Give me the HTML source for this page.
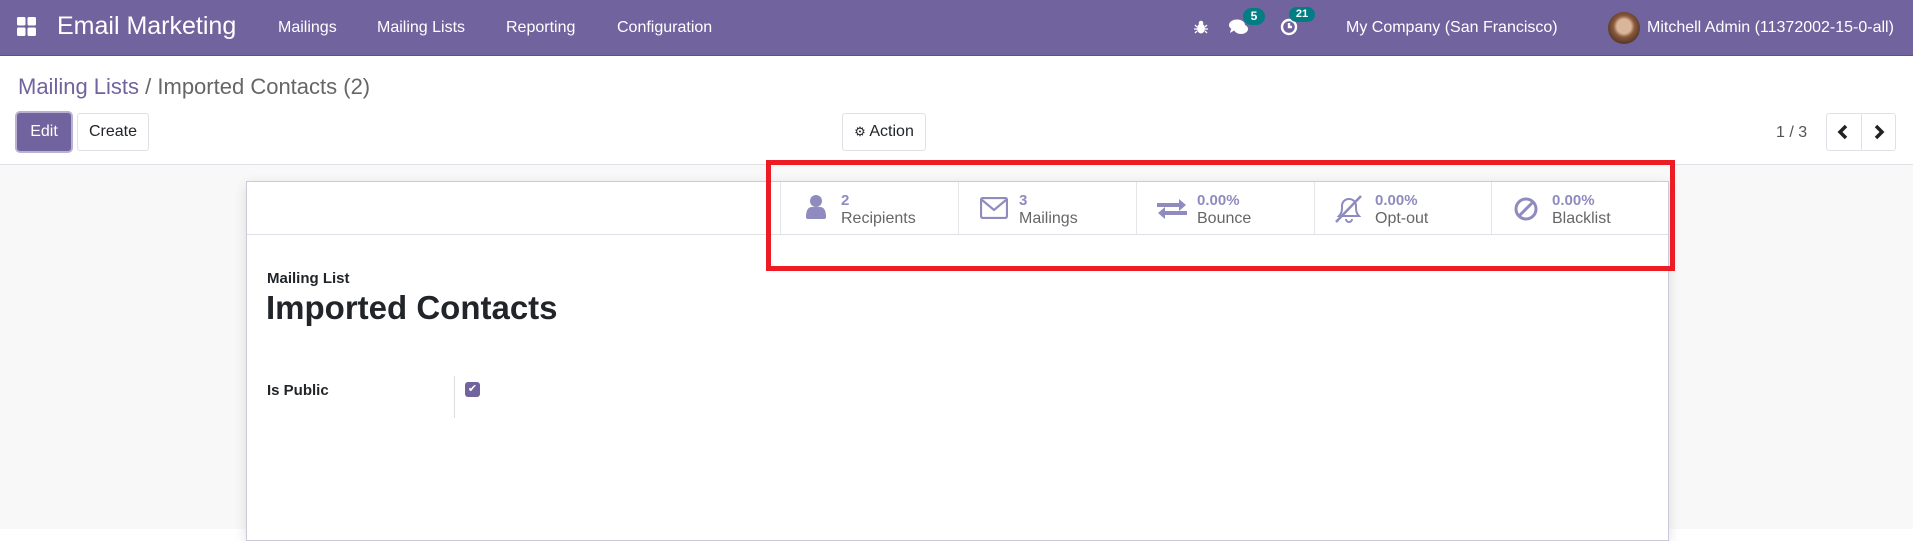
<!DOCTYPE html>
<html><head><meta charset="utf-8"><style>
*{box-sizing:border-box;margin:0;padding:0}
body{width:1913px;height:529px;overflow:hidden;font-family:"Liberation Sans",sans-serif;background:#fff;position:relative}
.a{position:absolute;white-space:nowrap}
.nav{left:0;top:0;width:1913px;height:56px;background:#71639e;border-bottom:1px solid #5d5287}
.nt{color:#fff;font-size:16px;top:19px}
.btn{border:1px solid #dee2e6;background:#fff;border-radius:3px;font-size:16px;color:#212529;text-align:center;line-height:36px;height:38px;top:113px}
.stat{top:182px;height:52px;width:178px;border-left:1px solid #e6e6e6}
.num{font-weight:bold;color:#8f8bbf;font-size:15px;top:10px}
.lbl{color:#666;font-size:16px;top:28px}
.ic{top:13px}
</style></head><body>
<div class="a nav"></div>
<svg class="a" style="left:17px;top:17px" width="20" height="20" viewBox="0 0 20 20" fill="#fff"><rect x="0" y="0" width="8.5" height="8.5" rx="1.5"/><rect x="10.5" y="0" width="8.5" height="8.5" rx="1.5"/><rect x="0" y="10.5" width="8.5" height="8.5" rx="1.5"/><rect x="10.5" y="10.5" width="8.5" height="8.5" rx="1.5"/></svg>
<div class="a" style="left:57px;top:12px;color:#fff;font-size:25px">Email Marketing</div>
<div class="a nt" style="left:278px">Mailings</div>
<div class="a nt" style="left:377px">Mailing Lists</div>
<div class="a nt" style="left:506px">Reporting</div>
<div class="a nt" style="left:617px">Configuration</div>
<svg class="a" style="left:1194px;top:20px" width="14" height="14" viewBox="0 0 14 14" fill="#fff"><ellipse cx="7" cy="8.5" rx="4" ry="5"/><circle cx="7" cy="3" r="2.3"/><path d="M1 5l2 2M13 5l-2 2M0 9h3M14 9h-3M1 13l2-2M13 13l-2-2" stroke="#fff" stroke-width="1.3"/></svg>
<svg class="a" style="left:1229px;top:19px" width="20" height="16" viewBox="0 0 20 16" fill="#fff"><ellipse cx="8" cy="6" rx="8" ry="5.5"/><ellipse cx="12" cy="10" rx="7" ry="5"/><path d="M2 10l-1 4 5-3z"/></svg>
<div class="a" style="left:1243px;top:8px;width:22px;height:17px;border-radius:9px;background:#017e84;color:#fff;font-size:12px;font-weight:bold;text-align:center;line-height:17px">5</div>
<svg class="a" style="left:1280px;top:18px" width="18" height="18" viewBox="0 0 18 18" fill="none" stroke="#fff" stroke-width="2.4"><circle cx="9" cy="9" r="7"/><path d="M9 5v4h3"/></svg>
<div class="a" style="left:1289px;top:7px;width:26px;height:15px;border-radius:8px;background:#017e84;color:#fff;font-size:11px;font-weight:bold;text-align:center;line-height:15px">21</div>
<div class="a nt" style="left:1346px">My Company (San Francisco)</div>
<div class="a" style="left:1608px;top:12px;width:32px;height:32px;border-radius:50%;background:radial-gradient(circle at 50% 45%,#d9b59a 0 30%,#8a5a3c 45%,#5b3a2a 70%)"></div>
<div class="a nt" style="left:1647px">Mitchell Admin (11372002-15-0-all)</div>

<div class="a" style="left:18px;top:74px;font-size:22px;color:#71639e">Mailing Lists<span style="color:#666"> / Imported Contacts (2)</span></div>
<div class="a btn" style="left:17px;width:54px;background:#71639e;color:#fff;border-color:#71639e;box-shadow:0 0 0 2px #b9b3d3">Edit</div>
<div class="a btn" style="left:77px;width:72px">Create</div>
<div class="a btn" style="left:842px;width:84px"><span style="font-size:13px">&#9881;</span> Action</div>
<div class="a" style="left:1776px;top:124px;font-size:16px;color:#555">1 / 3</div>
<div class="a btn" style="left:1826px;width:70px"></div>
<div class="a" style="left:1861px;top:114px;width:1px;height:36px;background:#dee2e6"></div>
<svg class="a" style="left:1836px;top:124px" width="50" height="16" viewBox="0 0 50 16" fill="none" stroke="#222" stroke-width="3.5"><path d="M10 2l-6 6 6 6M40 2l6 6-6 6"/></svg>
<div class="a" style="left:0;top:164px;width:1913px;height:365px;background:#f8f8f8;border-top:1px solid #dee2e6"></div>
<div class="a" style="left:246px;top:181px;width:1423px;height:360px;background:#fff;border:1px solid #ccc9db;box-shadow:0 4px 12px rgba(0,0,0,.12)"></div>
<div class="a" style="left:247px;top:234px;width:1421px;height:1px;background:#dee2e6"></div>

<div class="a stat" style="left:780px">
<svg class="a ic" style="left:24px" width="22" height="24" viewBox="0 0 22 24" fill="#8f8bbf"><circle cx="11" cy="6" r="6"/><path d="M1 22c0-8 3-10 6-10h8c3 0 6 2 6 10q0 2-2 2H3q-2 0-2-2z"/></svg>
<div class="a num" style="left:60px">2</div><div class="a lbl" style="left:60px">Recipients</div></div>
<div class="a stat" style="left:958px">
<svg class="a ic" style="left:21px;top:15px" width="28" height="22" viewBox="0 0 28 22" fill="none" stroke="#8f8bbf" stroke-width="2.2"><rect x="1" y="1" width="26" height="20" rx="2"/><path d="M2 3l12 10 12-10"/></svg>
<div class="a num" style="left:60px">3</div><div class="a lbl" style="left:60px">Mailings</div></div>
<div class="a stat" style="left:1136px">
<svg class="a ic" style="left:20px;top:17px" width="30" height="20" viewBox="0 0 30 20" fill="#8f8bbf"><path d="M0 4h22V0l7 6-7 6V8H0z"/><path d="M30 12H8V8l-7 6 7 6v-4h22z"/></svg>
<div class="a num" style="left:60px">0.00%</div><div class="a lbl" style="left:60px">Bounce</div></div>
<div class="a stat" style="left:1314px">
<svg class="a ic" style="left:18px;top:12px" width="32" height="30" viewBox="0 0 32 30" fill="none" stroke="#8f8bbf" stroke-width="2"><path d="M6 22c3-3 3-6 3-10 0-4 3-7 7-7s7 3 7 7c0 4 0 7 3 10z"/><path d="M13 25a3 3 0 0 0 6 0"/><path d="M28 2L3 28" stroke-width="2.5"/></svg>
<div class="a num" style="left:60px">0.00%</div><div class="a lbl" style="left:60px">Opt-out</div></div>
<div class="a stat" style="left:1491px">
<svg class="a ic" style="left:22px;top:15px" width="24" height="24" viewBox="0 0 24 24" fill="none" stroke="#8f8bbf" stroke-width="3"><circle cx="12" cy="12" r="10"/><path d="M5 19L19 5"/></svg>
<div class="a num" style="left:60px">0.00%</div><div class="a lbl" style="left:60px">Blacklist</div></div>

<div class="a" style="left:766px;top:160px;width:909px;height:111px;border:5px solid #ed1c24"></div>

<div class="a" style="left:267px;top:270px;font-size:15px;font-weight:bold;color:#212529">Mailing List</div>
<div class="a" style="left:266px;top:289px;font-size:33px;font-weight:bold;color:#212529">Imported Contacts</div>
<div class="a" style="left:267px;top:382px;font-size:15px;font-weight:bold;color:#212529">Is Public</div>
<div class="a" style="left:454px;top:376px;width:1px;height:42px;background:#ddd"></div>
<div class="a" style="left:465px;top:382px;width:15px;height:15px;border-radius:3px;background:#71639e;color:#fff;font-size:11px;text-align:center;line-height:15px">&#10004;</div>
</body></html>
